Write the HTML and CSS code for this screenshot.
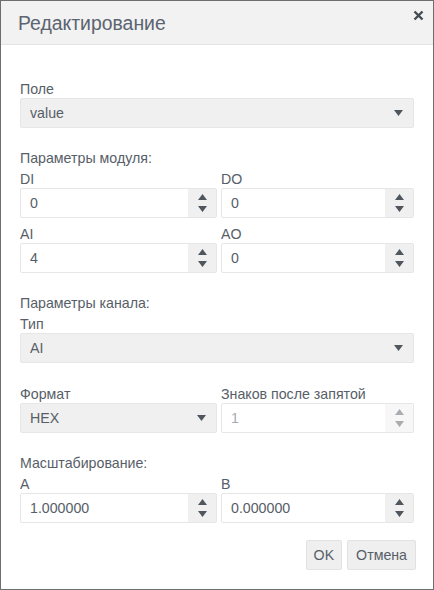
FILE: index.html
```html
<!DOCTYPE html>
<html lang="ru">
<head>
<meta charset="utf-8">
<link rel="stylesheet" href="styles.css">
</head>
<body>
<div class="dialog">
  <div class="header">
    <span class="title">Редактирование</span>
    <span class="close"><svg width="11" height="11" viewBox="0 0 11 11"><path d="M1.5 1.5 L9.5 9.5 M9.5 1.5 L1.5 9.5" stroke="#454b52" stroke-width="2.4"/></svg></span>
  </div>
  <div class="body">
    <div class="section">
      <div class="label">Поле</div>
      <div class="select"><span>value</span><svg class="caret" width="9" height="6" viewBox="0 0 9 6"><path d="M0 0 H9 L4.5 6 Z" fill="#50565e"/></svg></div>
    </div>

    <div class="section">
      <div class="heading">Параметры модуля:</div>
      <div class="row">
        <div class="field">
          <div class="label">DI</div>
          <div class="spin"><span class="val">0</span><span class="btns"><svg width="9" height="18" viewBox="0 0 9 18"><path d="M0 6 L4.5 0 L9 6 Z M0 12 H9 L4.5 18 Z" fill="#50565e"/></svg></span></div>
        </div>
        <div class="field">
          <div class="label">DO</div>
          <div class="spin"><span class="val">0</span><span class="btns"><svg width="9" height="18" viewBox="0 0 9 18"><path d="M0 6 L4.5 0 L9 6 Z M0 12 H9 L4.5 18 Z" fill="#50565e"/></svg></span></div>
        </div>
      </div>
      <div class="row">
        <div class="field">
          <div class="label">AI</div>
          <div class="spin"><span class="val">4</span><span class="btns"><svg width="9" height="18" viewBox="0 0 9 18"><path d="M0 6 L4.5 0 L9 6 Z M0 12 H9 L4.5 18 Z" fill="#50565e"/></svg></span></div>
        </div>
        <div class="field">
          <div class="label">AO</div>
          <div class="spin"><span class="val">0</span><span class="btns"><svg width="9" height="18" viewBox="0 0 9 18"><path d="M0 6 L4.5 0 L9 6 Z M0 12 H9 L4.5 18 Z" fill="#50565e"/></svg></span></div>
        </div>
      </div>
    </div>

    <div class="section">
      <div class="heading">Параметры канала:</div>
      <div class="label">Тип</div>
      <div class="select"><span>AI</span><svg class="caret" width="9" height="6" viewBox="0 0 9 6"><path d="M0 0 H9 L4.5 6 Z" fill="#50565e"/></svg></div>
    </div>

    <div class="section">
      <div class="row">
        <div class="field">
          <div class="label">Формат</div>
          <div class="select"><span>HEX</span><svg class="caret" width="9" height="6" viewBox="0 0 9 6"><path d="M0 0 H9 L4.5 6 Z" fill="#50565e"/></svg></div>
        </div>
        <div class="field">
          <div class="label">Знаков после запятой</div>
          <div class="spin disabled"><span class="val">1</span><span class="btns"><svg width="9" height="18" viewBox="0 0 9 18"><path d="M0 6 L4.5 0 L9 6 Z M0 12 H9 L4.5 18 Z" fill="#a9adb2"/></svg></span></div>
        </div>
      </div>
    </div>

    <div class="section">
      <div class="heading">Масштабирование:</div>
      <div class="row">
        <div class="field">
          <div class="label">A</div>
          <div class="spin"><span class="val">1.000000</span><span class="btns"><svg width="9" height="18" viewBox="0 0 9 18"><path d="M0 6 L4.5 0 L9 6 Z M0 12 H9 L4.5 18 Z" fill="#50565e"/></svg></span></div>
        </div>
        <div class="field">
          <div class="label">B</div>
          <div class="spin"><span class="val">0.000000</span><span class="btns"><svg width="9" height="18" viewBox="0 0 9 18"><path d="M0 6 L4.5 0 L9 6 Z M0 12 H9 L4.5 18 Z" fill="#50565e"/></svg></span></div>
        </div>
      </div>
    </div>

    <div class="footer">
      <button class="btn btn-ok">OK</button>
      <button class="btn">Отмена</button>
    </div>
  </div>
</div>
</body>
</html>
```

FILE: styles.css
```css
* { box-sizing: border-box; }
html, body { margin: 0; padding: 0; background: #fff; }
body {
  font-family: "Liberation Sans", Arial, sans-serif;
  font-size: 14.2px;
  color: #575e68;
}
.dialog {
  width: 434px;
  height: 590px;
  border: 1px solid #6e6e6e;
  background: #fff;
  display: flex;
  flex-direction: column;
}
.header {
  height: 44px;
  background: #f2f2f2;
  border-bottom: 1px solid #e3e3e3;
  display: flex;
  align-items: center;
  justify-content: space-between;
  padding: 0 8px 0 17px;
  position: relative;
}
.title {
  font-size: 19.4px;
  color: #5b6470;
  margin-top: 1px;
}
.close {
  position: absolute;
  right: 9px;
  top: 9px;
  width: 11px;
  height: 11px;
  display: flex;
}
.body {
  padding: 33px 19px 0 19px;
  display: flex;
  flex-direction: column;
}
.section {
  display: flex;
  flex-direction: column;
  margin-bottom: 20px;
}
.heading {
  line-height: 20px;
  height: 20px;
}
.label {
  line-height: 20px;
  height: 20px;
  padding-top: 1px;
}
.row {
  display: grid;
  grid-template-columns: 197px 1fr;
  column-gap: 4px;
}
.row + .row { margin-top: 5px; }
.field {
  min-width: 0;
  display: flex;
  flex-direction: column;
}
.select {
  height: 30px;
  background: #f0f0f0;
  border: 1px solid #e6e6e6;
  border-radius: 2px;
  display: flex;
  align-items: center;
  justify-content: space-between;
  padding: 0 10px 0 9px;
}
.caret { display: block; }
.spin {
  height: 30px;
  border: 1px solid #e6e6e6;
  border-radius: 2px;
  display: flex;
  align-items: stretch;
  background: #fff;
}
.spin .val {
  flex: 1;
  display: flex;
  align-items: center;
  padding-left: 9px;
}
.spin .btns {
  width: 28px;
  background: #f0f0f0;
  display: flex;
  align-items: center;
  justify-content: center;
}
.spin.disabled .val { color: #a8acb1; }
.spin.disabled .btns { background: #f7f7f7; }
.footer {
  display: flex;
  justify-content: flex-end;
  gap: 5px;
  margin-top: -3px;
  margin-right: -2px;
}
.btn {
  font-family: "Liberation Sans", Arial, sans-serif;
  font-size: 14.2px;
  color: #575e68;
  height: 30px;
  padding: 0 8px;
  background: #efefef;
  border: 1px solid #e2e2e2;
  border-radius: 2px;
}
.btn-ok { padding: 0 7px; }
```
